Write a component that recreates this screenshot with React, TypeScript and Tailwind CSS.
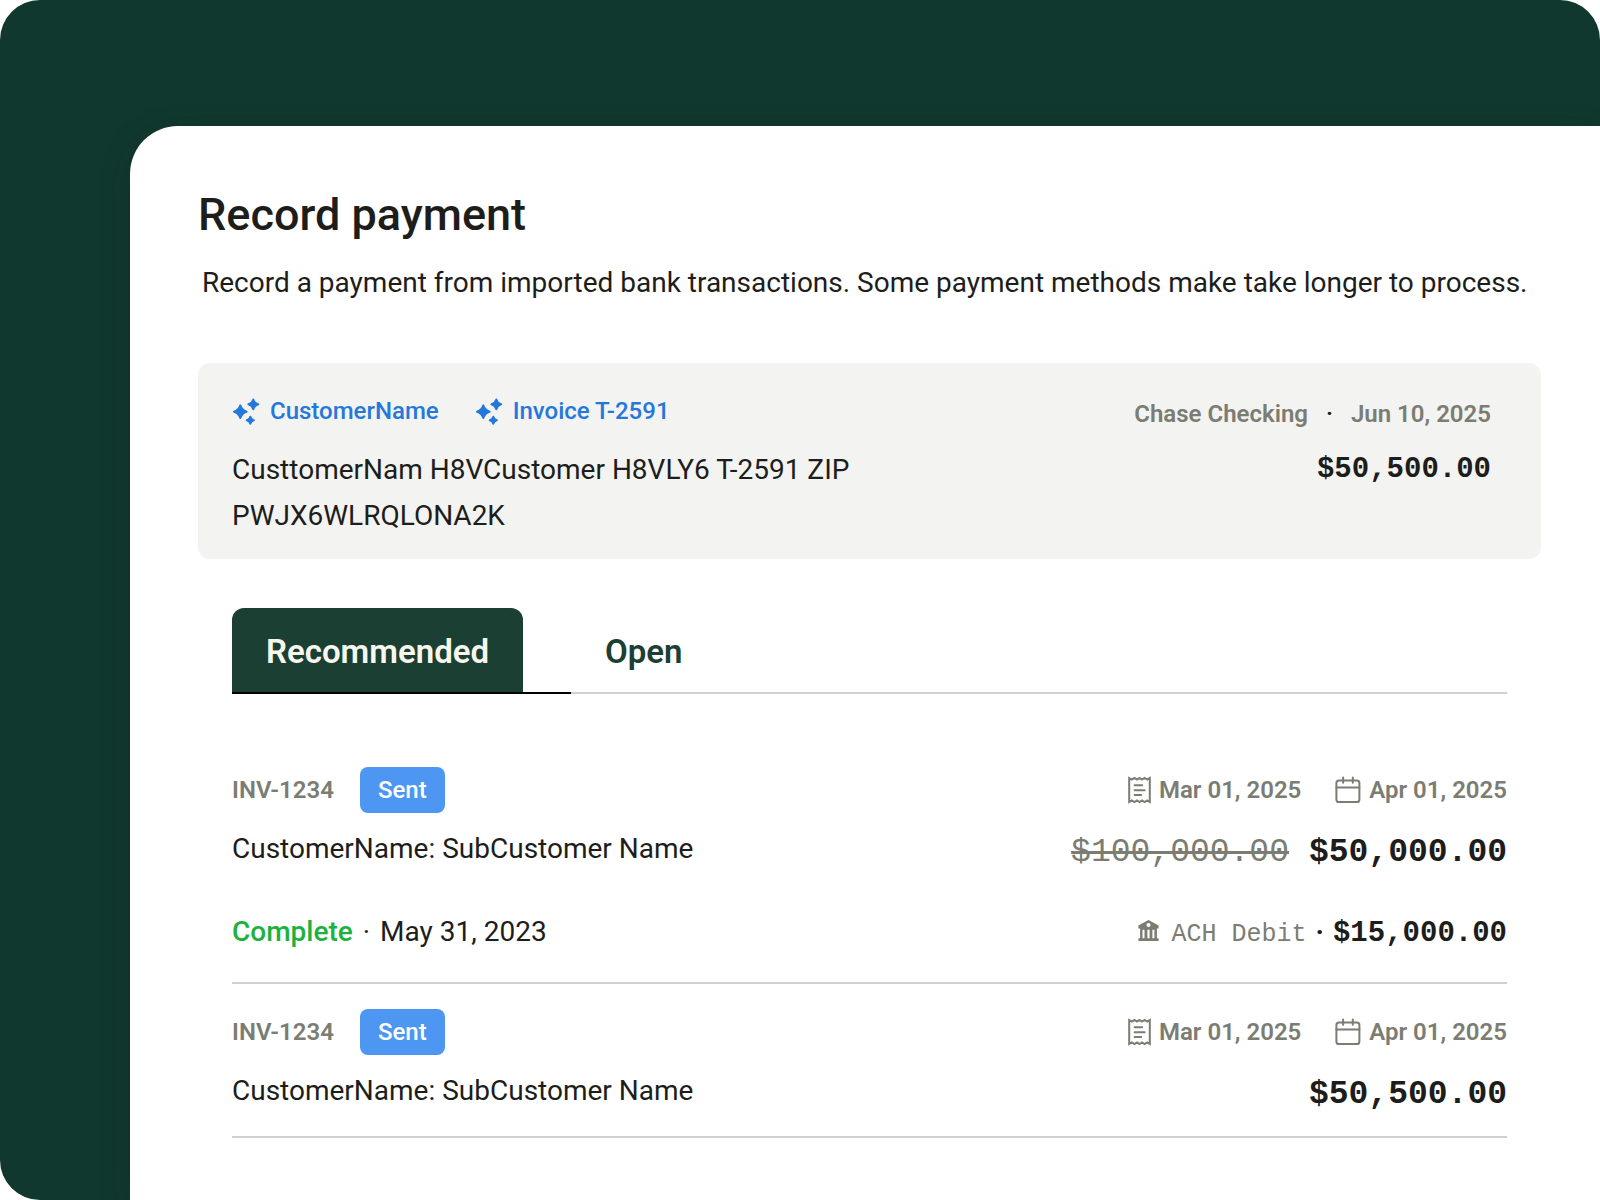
import { useState } from "react"

interface Payment {
  status: string
  date: string
  method: string
  amount: string
}

interface Invoice {
  number: string
  status: string
  customer: string
  issued: string
  due: string
  original?: string
  amount: string
  payment?: Payment
}

const INVOICES: Invoice[] = [
  {
    number: "INV-1234",
    status: "Sent",
    customer: "CustomerName: SubCustomer Name",
    issued: "Mar 01, 2025",
    due: "Apr 01, 2025",
    original: "$100,000.00",
    amount: "$50,000.00",
    payment: {
      status: "Complete",
      date: "May 31, 2023",
      method: "ACH Debit",
      amount: "$15,000.00",
    },
  },
  {
    number: "INV-1234",
    status: "Sent",
    customer: "CustomerName: SubCustomer Name",
    issued: "Mar 01, 2025",
    due: "Apr 01, 2025",
    amount: "$50,500.00",
  },
]

const MATCHES = ["CustomerName", "Invoice T-2591"]
const TABS = ["Recommended", "Open"]
const MONO = "font-['Liberation_Mono',monospace]"

function SparklesIcon() {
  return (
    <svg
      width="28"
      height="28"
      viewBox="0 0 28 28"
      fill="currentColor"
      stroke="currentColor"
      strokeWidth="2"
      strokeLinejoin="round"
      aria-hidden="true"
    >
      <path d="M8.3 8.4 Q9.8 13.2 14.6 14.7 Q9.8 16.2 8.3 21 Q6.8 16.2 2 14.7 Q6.8 13.2 8.3 8.4Z" />
      <path d="M21.3 2.4 Q22.3 6.3 26.2 7.3 Q22.3 8.3 21.3 12.2 Q20.3 8.3 16.4 7.3 Q20.3 6.3 21.3 2.4Z" />
      <path d="M18.3 19.8 Q19 22.6 21.8 23.3 Q19 24 18.3 26.8 Q17.6 24 14.8 23.3 Q17.6 22.6 18.3 19.8Z" />
    </svg>
  )
}

function ReceiptIcon() {
  return (
    <svg
      width="23"
      height="28"
      viewBox="0 0 23 28"
      fill="none"
      stroke="currentColor"
      strokeWidth="2"
      aria-hidden="true"
    >
      <path d="M1.2 2 L3.8 3.6 L6.4 2 L9 3.6 L11.5 2 L14 3.6 L16.6 2 L19.2 3.6 L21.8 2 V26 L19.2 24.4 L16.6 26 L14 24.4 L11.5 26 L9 24.4 L6.4 26 L3.8 24.4 L1.2 26Z" />
      <path d="M6.6 9.3h7.6M6.6 14.3h10M6.6 19h6.6" strokeLinecap="round" />
    </svg>
  )
}

function CalendarIcon() {
  return (
    <svg
      width="26"
      height="28"
      viewBox="0 0 26 28"
      fill="none"
      stroke="currentColor"
      strokeWidth="2"
      strokeLinecap="round"
      aria-hidden="true"
    >
      <rect x="1.4" y="4.4" width="23" height="21.6" rx="2.6" />
      <path d="M1.4 11.4h23M8.1 1.6v5.2M17.8 1.6v5.2" />
    </svg>
  )
}

function BankIcon() {
  return (
    <svg
      width="21"
      height="21"
      viewBox="0 0 21 21"
      fill="currentColor"
      fillRule="evenodd"
      aria-hidden="true"
    >
      <path d="M10.5 0 L20.6 5.4 V8.6 H18.9 V18.3 H20.6 V21 H.4 V18.3 H2.1 V8.6 H.4 V5.4Z M10.5 3.1a2 2 0 1 0 0 4a2 2 0 1 0 0-4Z M4.5 9.8v8.5h2V9.8Z M9.4 9.8v8.5h2.2V9.8Z M14.4 9.8v8.5h2V9.8Z" />
    </svg>
  )
}

function TransactionCard() {
  return (
    <section className="flex justify-between rounded-xl bg-[#f3f3f1] pt-8 pr-[50px] pb-5 pl-[34px]">
      <div className="max-w-[640px]">
        <div className="flex gap-9">
          {MATCHES.map((label) => (
            <a
              key={label}
              href="#"
              className="flex items-center gap-[10px] text-2xl font-medium text-[#2578db]"
            >
              <SparklesIcon />
              {label}
            </a>
          ))}
        </div>
        <p className="mt-5 text-[28px] leading-[46px]">
          CusttomerNam H8VCustomer H8VLY6 T-2591 ZIP PWJX6WLRQLONA2K
        </p>
      </div>

      <div className="pt-[3px] text-right">
        <p className="flex justify-end gap-[18px] text-2xl font-semibold text-[#7b7d73]">
          <span>Chase Checking</span>
          <span className="text-[#1d1d1b]">·</span>
          <span>Jun 10, 2025</span>
        </p>
        <p className={`mt-5 text-[29px] leading-10 font-bold ${MONO}`}>
          $50,500.00
        </p>
      </div>
    </section>
  )
}

function InvoiceRow({ invoice }: { invoice: Invoice }) {
  const { payment } = invoice

  return (
    <li className="border-b-2 border-[#d0d0cc] pb-[21px]">
      <div className="flex justify-between">
        <div>
          <div className="flex h-[46px] items-center gap-[26px] text-2xl">
            <span className="font-semibold text-[#7b7d73]">
              {invoice.number}
            </span>
            <span className="rounded-lg bg-[#4d96f1] px-[18px] py-[7px] font-medium text-white">
              {invoice.status}
            </span>
          </div>
          <p className="mt-4 text-[28px] leading-10">{invoice.customer}</p>
        </div>

        <div>
          <div className="flex h-[46px] items-center justify-end gap-[34px] text-2xl font-semibold text-[#7b7d73]">
            <span className="flex items-center gap-2">
              <ReceiptIcon />
              {invoice.issued}
            </span>
            <span className="flex items-center gap-2">
              <CalendarIcon />
              {invoice.due}
            </span>
          </div>
          <p
            className={`mt-5 flex justify-end gap-5 text-[33px] leading-10 ${MONO}`}
          >
            {invoice.original && (
              <s className="text-[#7b7d73] decoration-[3px]">
                {invoice.original}
              </s>
            )}
            <b className="font-bold">{invoice.amount}</b>
          </p>
        </div>
      </div>

      {payment && (
        <div className="flex items-baseline justify-between pt-[39px] pb-[6px]">
          <p className="flex gap-[10px] text-[28px] leading-10">
            <span className="font-medium text-[#1cb240]">{payment.status}</span>
            <span>·</span>
            <span>{payment.date}</span>
          </p>
          <p className={`flex items-baseline leading-10 ${MONO}`}>
            <span className="mr-3 text-[#7b7d73]">
              <BankIcon />
            </span>
            <span className="text-[25px] text-[#7b7d73]">{payment.method}</span>
            <span className="mx-[9px] font-['Roboto',sans-serif] text-[28px] font-bold">
              ·
            </span>
            <b className="text-[29px] font-bold">{payment.amount}</b>
          </p>
        </div>
      )}
    </li>
  )
}

export default function App() {
  const [active, setActive] = useState(TABS[0])

  return (
    <div className="h-screen overflow-hidden rounded-[40px] rounded-br-none bg-[#11382e] pt-[126px] pl-[130px] font-['Roboto',sans-serif] text-[#1d1d1b]">
      <main className="min-h-full rounded-tl-[48px] bg-white pt-[61px] pr-[59px] pl-[68px] shadow-[0_8px_32px_rgba(20,30,25,0.2)]">
        <h1 className="text-[45px] leading-[56px] font-medium">
          Record payment
        </h1>
        <p className="mt-5 mb-[60px] pl-1 text-[28px] leading-10">
          Record a payment from imported bank transactions. Some payment methods
          make take longer to process.
        </p>

        <TransactionCard />

        <div className="mt-[49px] px-[34px]">
          <div role="tablist" className="flex border-b-2 border-[#d0d0cc]">
            {TABS.map((tab) => (
              <div
                key={tab}
                className={
                  tab === active
                    ? "-mb-[2px] border-b-2 border-black pr-12"
                    : "pr-12"
                }
              >
                <button
                  role="tab"
                  aria-selected={tab === active}
                  onClick={() => setActive(tab)}
                  className={`rounded-t-xl px-[34px] pt-6 pb-5 text-[33px] leading-10 font-semibold ${
                    tab === active
                      ? "bg-[#1c3f33] text-[#f8f7ee]"
                      : "text-[#1c3f33]"
                  }`}
                >
                  {tab}
                </button>
              </div>
            ))}
          </div>

          <ul className="mt-[73px] space-y-[25px]">
            {INVOICES.map((invoice, i) => (
              <InvoiceRow key={i} invoice={invoice} />
            ))}
          </ul>
        </div>
      </main>
    </div>
  )
}
